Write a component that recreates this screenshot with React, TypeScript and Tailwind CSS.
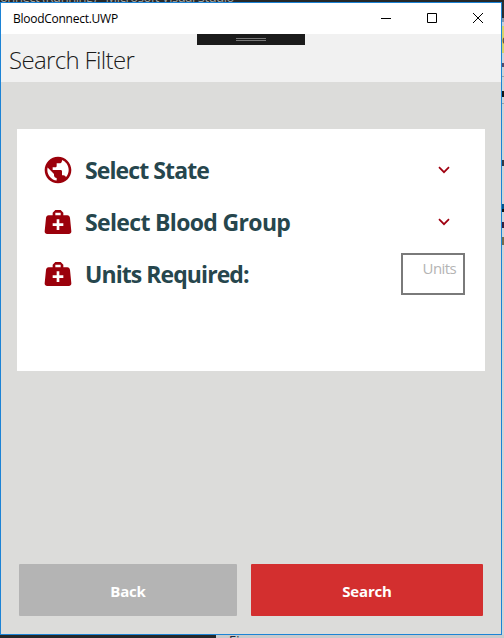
import type { ReactNode } from "react";
import { MdPublic } from "react-icons/md";

function MedicalBag() {
  return (
    <svg viewBox="0 0 24 24" className="size-8 shrink-0" fill="currentColor">
      <path d="M10,3L8,5V7H5C3.85,7 3.12,8 3,9L2,19C1.88,20 2.54,21 4,21H20C21.46,21 22.12,20 22,19L21,9C20.88,8 20.06,7 19,7H16V5L14,3H10M10,5H14V7H10V5M11,10H13V13H16V15H13V18H11V15H8V13H11V10Z" />
    </svg>
  );
}

function Chevron() {
  return (
    <svg viewBox="0 0 12 8" className="mr-[15px] h-2 w-3" fill="none" stroke="#a00010" strokeWidth="1.7">
      <path d="M1 1.2L6 6.2L11 1.2" />
    </svg>
  );
}

function Row({ icon, label, spacing, children }: { icon: ReactNode; label: string; spacing: string; children: ReactNode }) {
  return (
    <div className="flex h-[52px] items-center text-[#9b000b]">
      {icon}
      <span className={`ml-[11px] flex-1 whitespace-nowrap pt-px text-[23px] font-bold leading-none text-[#26464d] ${spacing}`}>{label}</span>
      {children}
    </div>
  );
}

export default function App() {
  return (
    <div className="flex h-[638px] w-[504px] flex-col overflow-hidden bg-[#262829] font-['Open_Sans','Noto_Sans',sans-serif]">
      <div className="relative h-[2px] shrink-0 overflow-hidden text-[13px] leading-none text-[#a0a4a4]">
        <span className="absolute -top-[9px] left-0 whitespace-nowrap tracking-[-0.45px]">onnect (Running) - Microsoft Visual Studio</span>
      </div>
      <div className="flex h-[633px] shrink-0">
        <div className="flex w-[502px] flex-col border border-[#1c83d5] bg-[#dcdcda]">
          <div className="flex h-[31px] shrink-0 items-center bg-white pl-3 text-black">
            <span className="flex-1 text-[12px] leading-none tracking-[-0.26px]">BloodConnect.UWP</span>
            <svg className="h-[31px] w-[138px]" viewBox="0 0 138 31" fill="none" stroke="black" strokeWidth="1">
              <path d="M18 15.5h10M64.500 10.500h9v9h-9zM110 10l10 10M120 10l-10 10" />
            </svg>
          </div>
          <div className="relative flex h-12 shrink-0 items-center bg-[#f1f1f1] pt-[4px] pl-[8px]">
            <div className="absolute left-[196px] top-0 flex h-[11px] w-[108px] flex-col items-center justify-center gap-px bg-[#1b1b1b]">
              <div className="h-px w-[30px] bg-[#777]" />
              <div className="h-px w-[30px] bg-[#777]" />
            </div>
            <h1 className="whitespace-nowrap text-[24px] font-light leading-none tracking-[-0.65px] text-[#1c1c1c]">Search Filter</h1>
          </div>
          <main className="flex flex-1 flex-col px-4 pt-[47px] pb-[18px]">
            <section className="h-[242px] bg-white pt-[15px] pr-5 pl-[25px]">
              <Row icon={<MdPublic className="size-8 shrink-0" />} label="Select State" spacing="tracking-[-0.9px]"><Chevron /></Row>
              <Row icon={<MedicalBag />} label="Select Blood Group" spacing="tracking-[-0.66px]"><Chevron /></Row>
              <Row icon={<MedicalBag />} label="Units Required:" spacing="tracking-[-0.93px]">
                <div className="-mt-px h-[42px] w-16 border-2 border-[#7a7a7a] pt-[6px] pr-[7px] text-right text-[15px] leading-none tracking-[-0.6px] text-[#b4b4b4]">Units</div>
              </Row>
            </section>
            <div className="mt-auto flex gap-[14px] px-[2px] text-[15px] font-bold tracking-[-0.2px] text-white">
              <button className="h-[52px] w-[218px] rounded-[1px] bg-[#b4b4b4] pt-[2px]">Back</button>
              <button className="h-[52px] w-[232px] rounded-[1px] bg-[#d32f2f] pt-[2px]">Search</button>
            </div>
          </main>
        </div>
        <div className="flex w-[2px] flex-col overflow-hidden bg-[#d0d4d8]">
          <div className="h-4 shrink-0 bg-[#2b2d30]" />
          <div className="h-1 shrink-0 bg-[#8795a8]" />
          <div className="h-1 shrink-0 bg-[#c9d0da]" />
          <div className="h-[27px] shrink-0 bg-[#d6d36a] text-[12px] leading-[27px] text-[#33363a]">c</div>
          <div className="mt-[10px] h-1 shrink-0 bg-[#574a68]" />
          <div className="mt-[9px] h-px shrink-0 bg-[#9ca2a8]" />
          <div className="mt-[14px] h-[6px] shrink-0 bg-[#151515]" />
          <div className="mt-[6px] h-px shrink-0 bg-[#9ca2a8]" />
          <div className="mt-[56px] h-[6px] shrink-0 bg-[#343944]" />
          <div className="mt-[38px] h-[5px] shrink-0 bg-[#075487]" />
          <div className="h-[3px] shrink-0 bg-[#101010]" />
          <div className="mt-[10px] h-[6px] shrink-0 bg-[#39203a]" />
          <div className="mt-[9px] h-[8px] shrink-0 bg-[#756c4c]" />
        </div>
      </div>
      <div className="flex h-[3px] shrink-0 overflow-hidden">
        <div className="w-[216px] bg-[#252728]" />
        <div className="flex-1 overflow-hidden bg-[#cacacb] pl-[13px] text-[13px] leading-[11px] text-[#23283a]">Ein</div>
      </div>
    </div>
  );
}
